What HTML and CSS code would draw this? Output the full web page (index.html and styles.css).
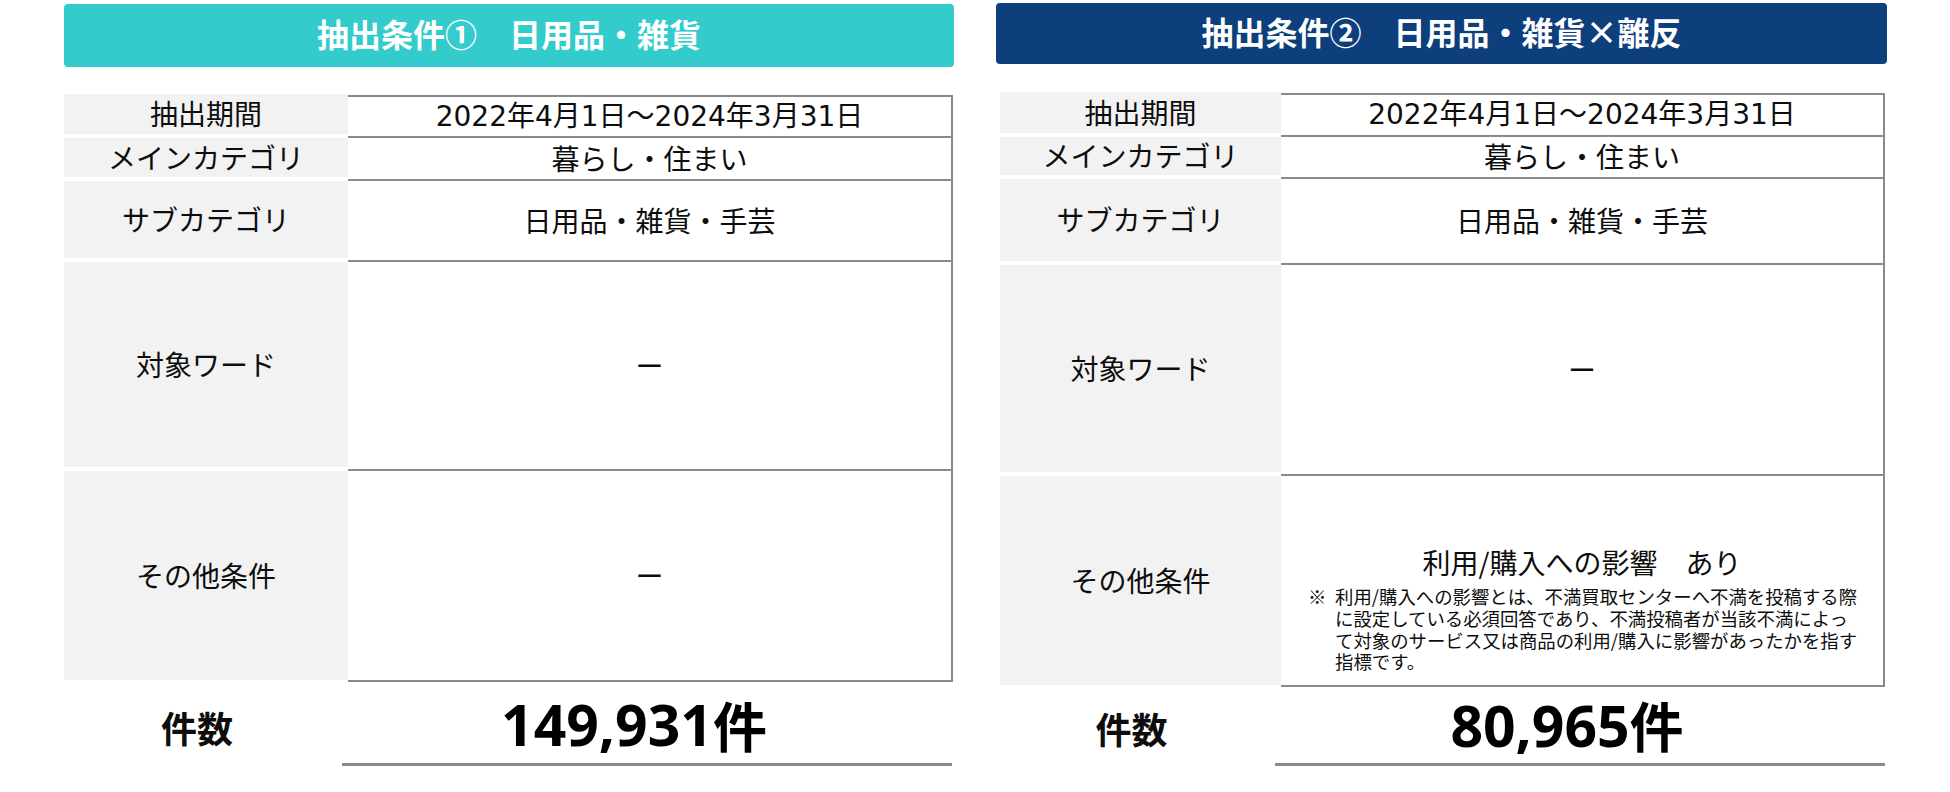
FILE: index.html
```html
<!DOCTYPE html>
<html lang="ja">
<head>
<meta charset="utf-8">
<title>抽出条件</title>
<link rel="stylesheet" href="styles.css">
</head>
<body>
<div class="page">
  <section class="panel panel-a">
    <h2 class="head head-teal">抽出条件①　日用品・雑貨</h2>
    <div class="tbl tbl-a">
      <div class="lab lab-first">抽出期間</div>
      <div class="val"><span class="num">2022年4月1日～2024年3月31日</span></div>
      <div class="lab">メインカテゴリ</div>
      <div class="val">暮らし・住まい</div>
      <div class="lab">サブカテゴリ</div>
      <div class="val">日用品・雑貨・手芸</div>
      <div class="lab">対象ワード</div>
      <div class="val">ー</div>
      <div class="lab">その他条件</div>
      <div class="val val-last">ー</div>
    </div>
    <div class="count count-a">
      <div class="count-lab">件数</div>
      <div class="count-val">149,931<span class="ken">件</span></div>
    </div>
  </section>

  <section class="panel panel-b">
    <h2 class="head head-navy">抽出条件②　日用品・雑貨×離反</h2>
    <div class="tbl tbl-b">
      <div class="lab lab-first">抽出期間</div>
      <div class="val"><span class="num">2022年4月1日～2024年3月31日</span></div>
      <div class="lab">メインカテゴリ</div>
      <div class="val">暮らし・住まい</div>
      <div class="lab">サブカテゴリ</div>
      <div class="val">日用品・雑貨・手芸</div>
      <div class="lab">対象ワード</div>
      <div class="val">ー</div>
      <div class="lab">その他条件</div>
      <div class="val val-last val-note">
        <div class="impact">利用/購入への影響　あり</div>
        <div class="note">
          <span class="mark">※</span>
          <div class="note-body">
            <span class="line">利用/購入への影響とは、不満買取センターへ不満を投稿する際</span>
            <span class="line">に設定している必須回答であり、不満投稿者が当該不満によっ</span>
            <span class="line">て対象のサービス又は商品の利用/購入に影響があったかを指す</span>
            <span class="line">指標です。</span>
          </div>
        </div>
      </div>
    </div>
    <div class="count count-b">
      <div class="count-lab">件数</div>
      <div class="count-val">80,965<span class="ken">件</span></div>
    </div>
  </section>
</div>
</body>
</html>
```

FILE: styles.css
```css
html, body {
  margin: 0;
  padding: 0;
  background: #ffffff;
}

body {
  font-family: "Noto Sans CJK JP", sans-serif;
  color: #0d0d0d;
}

.page {
  display: flex;
  align-items: flex-start;
  gap: 42px;
  padding: 4px 0 0 64px;
}

.panel {
  display: flex;
  flex-direction: column;
}

.panel-a {
  width: 890px;
}

.panel-b {
  width: 891px;
  margin-top: -1px;
}

.head {
  margin: 0;
  height: 63px;
  border-radius: 4px;
  display: flex;
  align-items: center;
  justify-content: center;
  color: #ffffff;
  font-size: 32px;
  font-weight: 700;
  line-height: 1;
  padding-bottom: 6px;
  box-sizing: border-box;
}

.head-teal {
  background: #33cbcb;
}

.head-navy {
  background: #0d3f7c;
  height: 61px;
}

.tbl {
  display: grid;
}

.tbl-a {
  margin-top: 28px;
  width: 889px;
  grid-template-columns: 284px 605px;
  grid-template-rows: 41px 43px 81px 209px 213px;
}

.tbl-b {
  margin-top: 29px;
  margin-left: 4px;
  width: 885px;
  grid-template-columns: 281px 604px;
  grid-template-rows: 42px 42px 86px 211px 213px;
}

.lab {
  background: #f2f2f2;
  margin: 2px 0 2px;
  display: flex;
  align-items: center;
  justify-content: center;
  font-size: 28px;
  line-height: 1.2;
}

.lab-first {
  margin-top: -1px;
}

.val {
  border-top: 2px solid #8a8a8a;
  border-right: 2px solid #8a8a8a;
  display: flex;
  align-items: center;
  justify-content: center;
  font-size: 28px;
  line-height: 1.2;
}

.val-last {
  border-bottom: 2px solid #8a8a8a;
}

.num {
  font-family: "DejaVu Sans", "Noto Sans CJK JP", sans-serif;
}

.val-note {
  flex-direction: column;
  justify-content: flex-end;
  padding-bottom: 12px;
}

.impact {
  font-size: 28px;
  line-height: 34px;
  margin-bottom: 7px;
}

.note {
  display: flex;
  width: 548px;
  font-size: 18.4px;
  line-height: 21.7px;
}

.mark {
  width: 27px;
  flex: none;
}

.note-body {
  display: flex;
  flex-direction: column;
}

.line {
  white-space: nowrap;
}

.count {
  display: flex;
}

.count-a {
  width: 888px;
  height: 84px;
}

.count-b {
  margin-left: 4px;
  width: 885px;
  height: 79px;
}

.count-lab {
  width: 278px;
  flex: none;
  display: flex;
  align-items: center;
  justify-content: center;
  padding-right: 12px;
  padding-top: 6px;
  box-sizing: border-box;
  font-size: 36px;
  font-weight: 700;
}

.count-b .count-lab {
  width: 275px;
  padding-top: 2px;
}

.count-val {
  flex: 1;
  border-bottom: 3px solid #8a8a8a;
  display: flex;
  align-items: center;
  justify-content: center;
  padding-right: 26px;
  padding-top: 4px;
  font-family: "Open Sans", "Noto Sans CJK JP", sans-serif;
  font-size: 57px;
  font-weight: 700;
  line-height: 1;
  color: #000;
}

.count-b .count-val {
  padding-top: 0;
}

.ken {
  font-family: "Noto Sans CJK JP", sans-serif;
  font-size: 54px;
}
```
